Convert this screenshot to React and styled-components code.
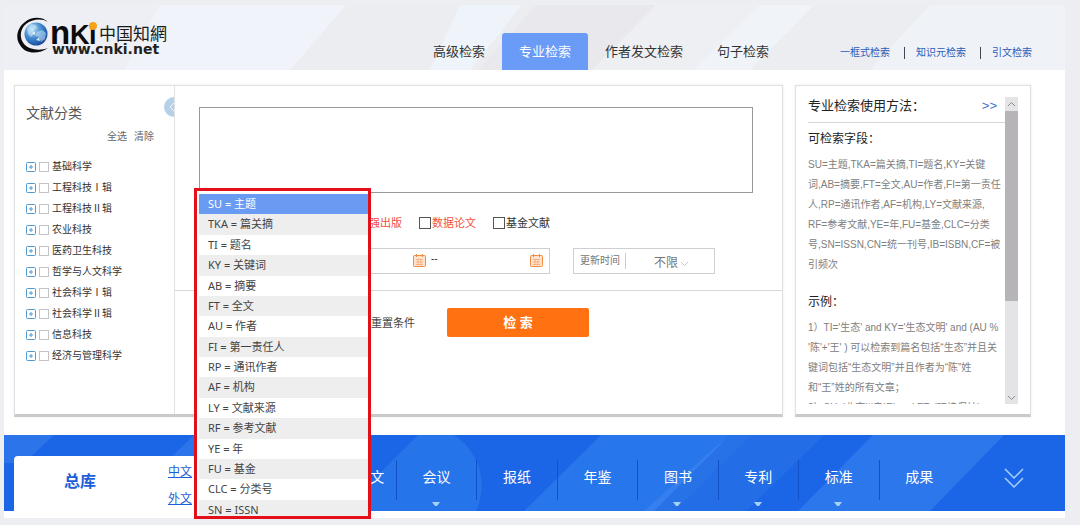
import React from "react";
import styled, { createGlobalStyle, css } from "styled-components";

const GlobalStyle = createGlobalStyle`
  *, *::before, *::after { box-sizing: border-box; }
  body {
    margin: 0;
    background: #edeef1;
    color: #444;
    font-family: "Liberation Sans", "Noto Sans CJK SC", sans-serif;
    font-size: 10px;
    line-height: 20px;
  }
  button, input, select, textarea { font: inherit; color: inherit; margin: 0; padding: 0; border: 0; background: none; border-radius: 0; }
  button { cursor: pointer; }
  ul { list-style: none; margin: 0; padding: 0; }
  h2, h3, p { margin: 0; font-weight: 400; }
  a { color: inherit; text-decoration: none; }
`;

const Shell = styled.div`
  margin: 5px 15px 6px 4px;
  background: #fff;
  padding-bottom: 7px;
`;

const Layer = styled.svg`
  grid-area: 1 / 1;
  width: 100%;
  height: 100%;
  min-height: 0;
  display: block;
`;

/* ---------- header ---------- */
const Header = styled.header`
  display: grid;
  grid-template: 65px / minmax(0, 1fr);
  background: #ecedf1;
`;

const HeaderRow = styled.div`
  grid-area: 1 / 1;
  display: flex;
  align-items: flex-end;
  padding: 0 33px 0 12px;
`;

const LogoLink = styled.a`
  align-self: flex-start;
  margin-top: 11px;
  height: 42px;
`;

const Tabs = styled.nav`
  display: flex;
  margin-left: auto;
`;

const Tab = styled.a`
  padding: 0 17px;
  height: 37px;
  line-height: 38px;
  font-size: 13px;
  color: #333;
  border-radius: 3px 3px 0 0;
  ${(p) => p.$active && css`
    background: #6a9bf6;
    color: #fff;
  `}
`;

const QuickLinks = styled.nav`
  display: flex;
  align-items: center;
  height: 34px;
  margin-left: 54px;
  color: #2a5cb8;
  a + a {
    margin-left: 14px;
    padding-left: 11px;
    border-left: 1px solid #445;
    line-height: 12px;
  }
`;

/* ---------- content ---------- */
const Content = styled.main`
  display: flex;
  gap: 12px;
  padding: 15px 34px 18px 10px;
`;

const Panel = styled.section`
  border: 1px solid #e0dfe2;
  border-bottom: 3px solid #cbc9cc;
  box-shadow: 0 0 3px rgba(0, 0, 0, 0.08);
  background: #fff;
`;

const SearchPanel = styled(Panel)`
  flex: 1;
  min-width: 0;
  display: flex;
`;

const Sidebar = styled.aside`
  position: relative;
  width: 160px;
  padding: 17px 20px 0 11px;
  border-right: 1px solid #e2e2e4;
  overflow: hidden;
`;

const SidebarTitle = styled.h2`
  font-size: 14px;
  color: #555;
`;

const SidebarActions = styled.div`
  display: flex;
  justify-content: flex-end;
  gap: 7px;
  margin-top: 4px;
  color: #666;
  button { line-height: 20px; }
`;

const CollapseButton = styled.button`
  position: absolute;
  top: 11px;
  right: -10px;
  width: 20px;
  height: 20px;
  border-radius: 50%;
  background: #b4d1e8;
  svg { display: block; }
`;

const Tree = styled.ul`
  margin-top: 9px;
`;

const TreeRow = styled.li`
  display: flex;
  align-items: center;
  height: 21px;
  color: #333;
  label { display: flex; align-items: center; gap: 3px; white-space: nowrap; }
`;

const ExpandButton = styled.button`
  display: block;
  width: 10px;
  height: 10px;
  margin-right: 3px;
  svg { display: block; }
`;

const Tick = styled.input.attrs({ type: "checkbox" })`
  appearance: none;
  width: ${(p) => p.$size}px;
  height: ${(p) => p.$size}px;
  border: 1px solid ${(p) => p.$line};
  background: #fff;
`;

const SearchArea = styled.div`
  position: relative;
  flex: 1;
  min-width: 0;
  padding-top: 21px;
`;

const SearchBody = styled.div`
  padding: 0 29px 16px 24px;
  border-bottom: 1px solid #d8d8da;
`;

const QueryBox = styled.textarea`
  display: block;
  width: 100%;
  height: 86px;
  border: 1px solid #999;
  resize: none;
`;

const OptionRow = styled.div`
  display: flex;
  gap: 17px;
  margin-top: 20px;
  padding-left: 72px;
`;

const Option = styled.label`
  display: flex;
  align-items: center;
  gap: 1px;
  font-size: 11px;
  color: ${(p) => (p.$hot ? "#f4503f" : "#333")};
`;

const FilterRow = styled.div`
  display: flex;
  gap: 23px;
  margin-top: 15px;
`;

const FieldBox = styled.div`
  display: flex;
  align-items: center;
  height: 26px;
  width: ${(p) => p.$width}px;
  padding: 0 6px;
  border: 1px solid #cfcfd1;
  color: #777;
`;

const DateInput = styled.input`
  width: ${(p) => p.$width}px;
  height: 20px;
`;

const CalendarButton = styled.button`
  width: 13px;
  height: 13px;
  align-self: flex-start;
  margin-top: 5px;
  svg { display: block; }
`;

const Dash = styled.span`
  padding: 0 5px;
  color: #333;
  line-height: 12px;
  height: 16px;
`;

const SelectWrap = styled.div`
  display: grid;
  grid-template-columns: 1fr auto 30px;
  align-items: center;
  flex: 1;
  height: 16px;
  margin-left: 5px;
  border-left: 1px solid #ccc;
`;

const PlainSelect = styled.select`
  grid-area: 1 / 1 / 2 / 3;
  appearance: none;
  width: 100%;
  font-size: 12px;
  text-align-last: right;
`;

const Actions = styled.div`
  display: flex;
  align-items: center;
  gap: 32px;
  padding: 17px 0 0 196px;
`;

const ResetButton = styled.button`
  font-size: 11px;
  color: #444;
`;

const SubmitButton = styled.button`
  width: 142px;
  height: 29px;
  border-radius: 2px;
  background: #ff7111;
  color: #fff;
  font-size: 13px;
  font-weight: 700;
`;

const FieldMenu = styled.div`
  position: absolute;
  z-index: 2;
  top: 102px;
  left: 19px;
  width: 177px;
  height: 331px;
  padding: 3px 0 0 2px;
  border: 3px solid #e3101a;
  background: #fff;
  overflow: hidden;
`;

const FieldList = styled.ul`
  display: grid;
  grid-template-rows: repeat(16, 1fr);
  height: 326px;
  font-family: "Noto Sans", "Noto Sans CJK SC", sans-serif;
  font-size: 11px;
`;

const FieldItem = styled.li`
  padding-left: 9px;
  white-space: nowrap;
  color: #444;
  background: #fff;
  &:nth-child(even) { background: #eeeeef; }
  ${(p) => p.$active && css`
    && { background: #6a9bf2; color: #fff; }
  `}
`;

/* ---------- help panel ---------- */
const HelpPanel = styled(Panel)`
  width: 236px;
  padding: 11px 12px 10px 12px;
  display: flex;
`;

const HelpText = styled.div`
  flex: 1;
  min-width: 0;
  height: 307px;
  overflow: hidden;
  color: #808080;
  p { white-space: nowrap; }
`;

const HelpHead = styled.div`
  display: flex;
  justify-content: space-between;
  height: 26px;
  padding-right: 8px;
  line-height: 17px;
  border-bottom: 1px solid #d6d6d8;
  h2 { font-size: 13px; color: #222; }
  a { color: #3f73c8; font-size: 13px; }
`;

const HelpTitle = styled.h3`
  font-size: 12px;
  color: #222;
  margin: ${(p) => p.$top}px 0 6px;
`;

const ScrollBar = styled.div`
  display: flex;
  flex-direction: column;
  width: 13px;
  background: #e4e3e5;
  button { height: 14px; display: block; }
  svg { display: block; }
`;

const ScrollThumb = styled.div`
  height: 190px;
  margin-bottom: auto;
  background: #b6b4b6;
`;

/* ---------- database bar ---------- */
const DbBar = styled.footer`
  display: grid;
  grid-template: 76px / minmax(0, 1fr);
  background: #1b66e6;
`;

const DbRow = styled.div`
  grid-area: 1 / 1;
  display: flex;
  padding-left: 10px;
`;

const AllCard = styled.div`
  display: flex;
  align-items: center;
  width: 221px;
  margin-top: 21px;
  padding-left: 50px;
  background: #fff;
  border-radius: 4px 4px 0 0;
  color: #1d5fd8;
`;

const AllLink = styled.a`
  padding-bottom: 4px;
  font-size: 16px;
  font-weight: 700;
  white-space: nowrap;
`;

const LangLinks = styled.div`
  display: flex;
  flex-direction: column;
  gap: 7px;
  margin-left: 72px;
  padding-top: 3px;
  font-size: 12px;
  white-space: nowrap;
  a { text-decoration: underline; }
`;

const DbList = styled.ul`
  flex: 1;
  display: flex;
`;

const DbItem = styled.li`
  flex: 1;
  display: flex;
  flex-direction: column;
  align-items: center;
  padding-top: 25px;
  color: #fff;
  a {
    align-self: stretch;
    height: 40px;
    line-height: 34px;
    text-align: center;
    font-size: 14px;
  }
  & + & a { border-left: 1px solid #1450c6; }
  svg { display: block; margin-top: 2px; }
`;

const MoreButton = styled.button`
  width: 106px;
  display: flex;
  justify-content: center;
  align-items: center;
  padding: 10px 0 0 4px;
`;

const categories = [
  "基础科学", "工程科技Ⅰ辑", "工程科技Ⅱ辑", "农业科技", "医药卫生科技",
  "哲学与人文科学", "社会科学Ⅰ辑", "社会科学Ⅱ辑", "信息科技", "经济与管理科学",
];

const fields = [
  "SU = 主题", "TKA = 篇关摘", "TI = 题名", "KY = 关键词", "AB = 摘要", "FT = 全文",
  "AU = 作者", "FI = 第一责任人", "RP = 通讯作者", "AF = 机构", "LY = 文献来源",
  "RF = 参考文献", "YE = 年", "FU = 基金", "CLC = 分类号", "SN = ISSN",
];

const databases = [
  { name: "学术期刊" }, { name: "学位论文" }, { name: "会议", more: true }, { name: "报纸" },
  { name: "年鉴" }, { name: "图书", more: true }, { name: "专利", more: true },
  { name: "标准", more: true }, { name: "成果" },
];

const fieldHelp = [
  "SU=主题,TKA=篇关摘,TI=题名,KY=关键",
  "词,AB=摘要,FT=全文,AU=作者,FI=第一责任",
  "人,RP=通讯作者,AF=机构,LY=文献来源,",
  "RF=参考文献,YE=年,FU=基金,CLC=分类",
  "号,SN=ISSN,CN=统一刊号,IB=ISBN,CF=被",
  "引频次",
];

const exampleHelp = [
  "1）TI='生态' and KY='生态文明' and (AU %",
  "'陈'+'王' ) 可以检索到篇名包括“生态”并且关",
  "键词包括“生态文明”并且作者为“陈”姓",
  "和“王”姓的所有文章；",
  "2）SU='北京'*'奥运' and FT='环境保护'",
];

function Logo() {
  return (
    <svg width="156" height="42" viewBox="0 0 156 42" role="img" aria-label="CNKI">
      <defs>
        <radialGradient id="globe" cx="0.35" cy="0.3" r="0.8">
          <stop offset="0" stopColor="#b9e0f5" />
          <stop offset="0.5" stopColor="#3f87cf" />
          <stop offset="1" stopColor="#123f92" />
        </radialGradient>
      </defs>
      <path d="M32 6C27 1 16 0 9 6C1 12-1 22 4 29C9 38 22 39 32 32C24 35 13 34 8 28C3 22 4 13 10 8C16 3 26 2 32 6Z" fill="#0b0b0d" />
      <circle cx="20" cy="18" r="11.500" fill="url(#globe)" />
      <path d="M11 12l4-4 5 1 1 3-4 2 2 3-4 4-3-3zM21 16l5-2 4 3-1 6-4 3-2-5-4-1z" fill="#d5effb" opacity="0.5" />
      <path d="M20 24l3-3 1 4zM16 17l3-1 0 3z" fill="#fff" opacity="0.8" />
      <g fontFamily="'Liberation Sans', sans-serif" fontWeight="700" fill="#0b0b0d">
        <text x="34" y="28" fontSize="33">n</text>
        <text x="54" y="28" fontSize="27">K</text>
        <text x="73" y="28" fontSize="27">i</text>
      </g>
      <circle cx="77" cy="10" r="4" fill="#f6a21c" />
      <text x="83" y="24" fontSize="17" fill="#1a1a1c" fontFamily="'Noto Sans CJK SC', sans-serif">中国知網</text>
      <text x="36" y="38" fontSize="14" fontWeight="700" fill="#222" fontFamily="'DejaVu Sans', sans-serif">www.cnki.net</text>
    </svg>
  );
}

function CalendarIcon() {
  return (
    <svg width="13" height="13" viewBox="0 0 13 13" fill="none" stroke="#f08a45">
      <rect x="0.5" y="1.5" width="12" height="11" rx="1" fill="#fde3cd" />
      <path d="M3.5 0v3M9.5 0v3" />
      <path d="M3 5.5h7M3 8h7M3 10.5h7M5 5v6M8 5v6" strokeWidth="0.500" />
    </svg>
  );
}

function Chevron({ up, width = 13, height = 14, color = "#8b8b8d" }) {
  return (
    <svg width={width} height={height} viewBox="0 0 13 14" fill="none" stroke={color}>
      <path d={up ? "M3 9l3.500-3.500L10 9" : "M3 6l3.500 3.500L10 6"} />
    </svg>
  );
}

export default function App() {
  return (
    <>
      <GlobalStyle />
      <Shell>
        <Header>
          <Layer viewBox="0 0 1061 65" preserveAspectRatio="none" aria-hidden="true">
            <path d="M156 0H342L286 65H100Z" fill="#f0f3f9" />
            <path d="M0 0H156L120 65H0Z" fill="#eeeff4" />
            <path d="M456 0H518L466 65H426Z" fill="#eff4fa" />
            <path d="M532 0H652L588 65H474Z" fill="#e9e9ed" />
            <path d="M652 0H756L700 65H588Z" fill="#eeeff3" />
            <path d="M756 0H810L746 65H690Z" fill="#f0f4f9" />
            <path d="M926 0H1061V65H866Z" fill="#eff3f8" />
          </Layer>
          <HeaderRow>
            <LogoLink href="#"><Logo /></LogoLink>
            <Tabs>
              <Tab href="#">高级检索</Tab>
              <Tab href="#" $active>专业检索</Tab>
              <Tab href="#">作者发文检索</Tab>
              <Tab href="#">句子检索</Tab>
            </Tabs>
            <QuickLinks>
              <a href="#">一框式检索</a>
              <a href="#">知识元检索</a>
              <a href="#">引文检索</a>
            </QuickLinks>
          </HeaderRow>
        </Header>

        <Content>
          <SearchPanel>
            <Sidebar>
              <SidebarTitle>文献分类</SidebarTitle>
              <SidebarActions>
                <button type="button">全选</button>
                <button type="button">清除</button>
              </SidebarActions>
              <CollapseButton type="button" aria-label="收起">
                <svg width="20" height="20" viewBox="0 0 20 20" fill="none" stroke="#eef6fc">
                  <path d="M10 6L6 10l4 4" />
                </svg>
              </CollapseButton>
              <Tree>
                {categories.map((name) => (
                  <TreeRow key={name}>
                    <ExpandButton type="button" aria-label={`展开${name}`}>
                      <svg width="10" height="10" viewBox="0 0 10 10" fill="none" stroke="#4f9ad0">
                        <rect x="0.500" y="0.500" width="9" height="9" rx="1" />
                        <path d="M3 5h4M5 3v4" />
                      </svg>
                    </ExpandButton>
                    <label><Tick $size={10} $line="#c4c4c6" />{name}</label>
                  </TreeRow>
                ))}
              </Tree>
            </Sidebar>

            <SearchArea>
              <SearchBody>
                <QueryBox aria-label="检索式" />
                <OptionRow>
                  <Option $hot><Tick $size={12} $line="#555" />网络首发</Option>
                  <Option $hot><Tick $size={12} $line="#555" />增强出版</Option>
                  <Option $hot><Tick $size={12} $line="#555" />数据论文</Option>
                  <Option><Tick $size={12} $line="#555" />基金文献</Option>
                </OptionRow>
                <FilterRow>
                  <FieldBox $width={351}>
                    <DateInput $width={207} aria-label="开始日期" />
                    <CalendarButton type="button" aria-label="选择开始日期"><CalendarIcon /></CalendarButton>
                    <Dash>--</Dash>
                    <DateInput $width={87} aria-label="结束日期" />
                    <CalendarButton type="button" aria-label="选择结束日期"><CalendarIcon /></CalendarButton>
                  </FieldBox>
                  <FieldBox $width={142}>
                    <label htmlFor="updated">更新时间</label>
                    <SelectWrap>
                      <PlainSelect id="updated"><option>不限</option></PlainSelect>
                      <Chevron color="#c8c8ca" />
                    </SelectWrap>
                  </FieldBox>
                </FilterRow>
              </SearchBody>
              <Actions>
                <ResetButton type="button">重置条件</ResetButton>
                <SubmitButton type="button">检 索</SubmitButton>
              </Actions>
              <FieldMenu>
                <FieldList>
                  {fields.map((f, i) => (
                    <FieldItem key={f} $active={i === 0}>{f}</FieldItem>
                  ))}
                </FieldList>
              </FieldMenu>
            </SearchArea>
          </SearchPanel>

          <HelpPanel>
            <HelpText>
              <HelpHead>
                <h2>专业检索使用方法：</h2>
                <a href="#">&gt;&gt;</a>
              </HelpHead>
              <HelpTitle $top={6}>可检索字段：</HelpTitle>
              {fieldHelp.map((t) => <p key={t}>{t}</p>)}
              <HelpTitle $top={17}>示例：</HelpTitle>
              {exampleHelp.map((t) => <p key={t}>{t}</p>)}
            </HelpText>
            <ScrollBar>
              <button type="button" aria-label="向上滚动"><Chevron up /></button>
              <ScrollThumb />
              <button type="button" aria-label="向下滚动"><Chevron /></button>
            </ScrollBar>
          </HelpPanel>
        </Content>

        <DbBar>
          <Layer viewBox="0 0 1061 76" preserveAspectRatio="none" aria-hidden="true">
            <path d="M0 0H50L20 28H0Z" fill="#2b74e9" />
            <path d="M190 0H240L170 76H112Z" fill="#2b74e9" />
            <path d="M414 0H450A60 60 0 0 1 472 76H338Z" fill="#2674ea" />
            <path d="M597 0H820L742 76H520Z" fill="#2876eb" />
            <path d="M670 76L747 0H725L640 76Z" fill="#3d85f0" opacity="0.6" />
            <path d="M716 10L650 76H742L820 0H724Z" fill="#1f69e4" opacity="0.6" />
            <path d="M869 0H1000L926 76H794Z" fill="#2c77ec" />
          </Layer>
          <DbRow>
            <AllCard>
              <AllLink href="#">总库</AllLink>
              <LangLinks>
                <a href="#">中文</a>
                <a href="#">外文</a>
              </LangLinks>
            </AllCard>
            <DbList>
              {databases.map((d) => (
                <DbItem key={d.name}>
                  <a href="#">{d.name}</a>
                  {d.more && (
                    <svg width="8" height="4" viewBox="0 0 8 4"><path d="M0 0h8L5 4H3z" fill="#a6d2f8" /></svg>
                  )}
                </DbItem>
              ))}
            </DbList>
            <MoreButton type="button" aria-label="更多">
              <svg width="20" height="22" viewBox="0 0 20 22" fill="none" stroke="#a9d0fb" strokeWidth="1.500">
                <path d="M1 2l9 9 9-9M1 11l9 9 9-9" />
              </svg>
            </MoreButton>
          </DbRow>
        </DbBar>
      </Shell>
    </>
  );
}
